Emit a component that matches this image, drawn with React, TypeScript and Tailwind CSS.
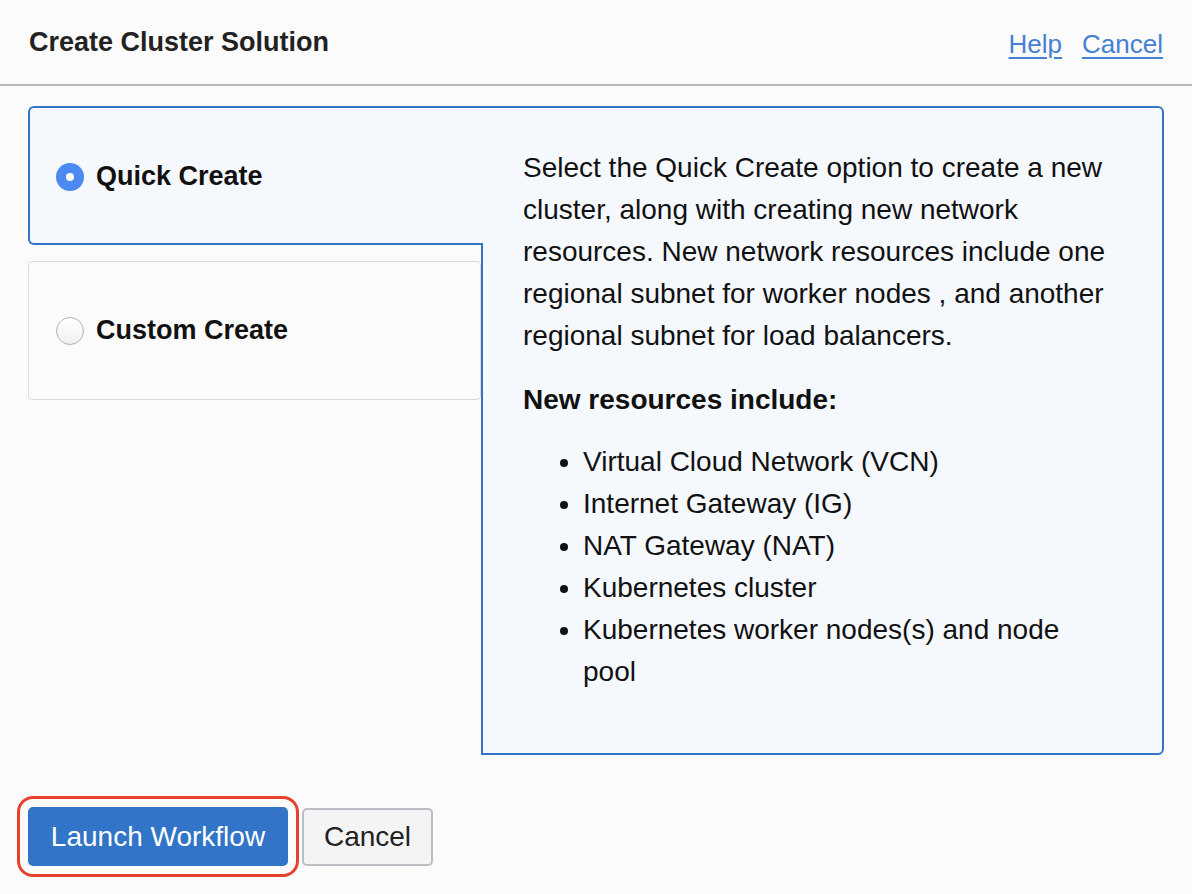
import React from "react";

export default function App() {
  return (
    <div className="min-h-screen w-[1192px] h-[894px] bg-[#fbfbfb] font-['Liberation_Sans',Arial,sans-serif] text-[#111]">
      <header className="h-[86px] flex items-center justify-between pl-[29px] pr-[29px] border-b-2 border-[#b9bac0]">
        <h1 className="text-[27px] font-bold text-[#222]">Create Cluster Solution</h1>
        <div className="flex gap-[20px] text-[26px] text-[#4480d3] pt-[4px]">
          <a className="underline underline-offset-[4px] decoration-[1.5px]" href="#">Help</a>
          <a className="underline underline-offset-[4px] decoration-[1.5px]" href="#">Cancel</a>
        </div>
      </header>

      <main className="px-[28px] pt-[20px]">
        <div className="flex">
          <div className="w-[453px] flex flex-col gap-[16px]">
            <div className="relative z-10 mr-[-2px] h-[139px] flex items-center pl-[26px] pt-[2px] border-2 border-r-0 border-[#3273c6] rounded-l-[6px] bg-[#f5f8fd]">
              <span className="w-[28px] h-[28px] rounded-full bg-[#4d8af0] flex items-center justify-center">
                <span className="w-[8px] h-[8px] rounded-full bg-white" />
              </span>
              <span className="ml-[12px] text-[27px] font-bold text-[#111]">Quick Create</span>
            </div>
            <div className="h-[139px] flex items-center pl-[27px] border border-[#dcdcdc] rounded-[4px] bg-[#fbfbfb]">
              <span className="w-[28px] h-[28px] rounded-full bg-gradient-to-b from-white to-[#f0f0f0] border border-[#b3b3b3]" />
              <span className="ml-[12px] text-[27px] font-bold text-[#111]">Custom Create</span>
            </div>
          </div>
          <div className="flex-1 h-[649px] border-2 border-[#3273c6] rounded-r-[6px] bg-[#f5f8fd] pl-[40px] pr-[38px] pt-[39px] text-[28px] leading-[42px] text-[#111]">
            <p>
              Select the Quick Create option to create a new cluster, along with creating new network resources. New network resources include one regional subnet for worker nodes , and another regional subnet for load balancers.
            </p>
            <p className="mt-[22px] font-bold">New resources include:</p>
            <ul className="mt-[20px] list-disc pl-[60px] pr-[60px]">
              <li>Virtual Cloud Network (VCN)</li>
              <li>Internet Gateway (IG)</li>
              <li>NAT Gateway (NAT)</li>
              <li>Kubernetes cluster</li>
              <li>Kubernetes worker nodes(s) and node pool</li>
            </ul>
          </div>
        </div>

        <div className="flex items-center mt-[52px]">
          <button className="w-[260px] h-[59px] rounded-[5px] bg-[#3174c8] text-white text-[28px] outline-[3px] outline-solid outline-[#e5412d] outline-offset-[8px]">
            Launch Workflow
          </button>
          <button className="ml-[14px] w-[131px] h-[58px] rounded-[5px] bg-[#f4f4f4] border-2 border-[#babdc1] text-[#222] text-[28px]">
            Cancel
          </button>
        </div>
      </main>
    </div>
  );
}
